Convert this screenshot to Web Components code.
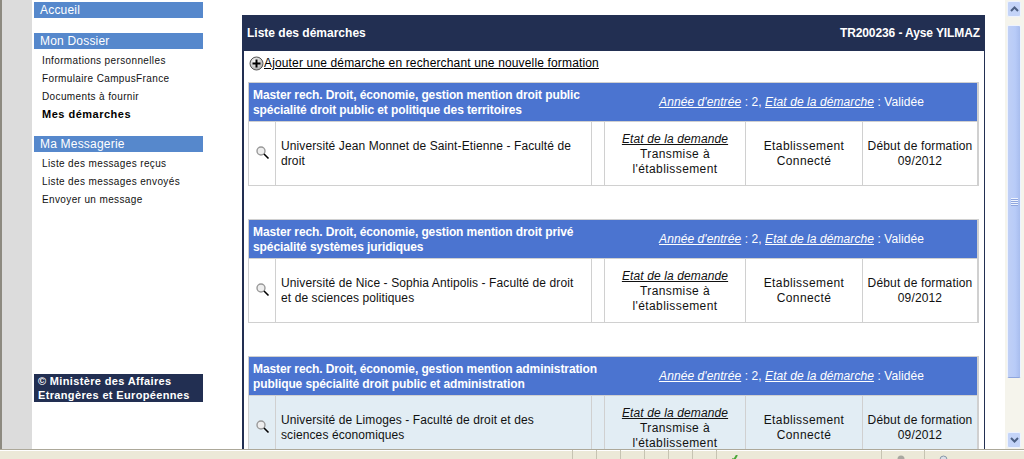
<!DOCTYPE html>
<html lang="fr">
<head>
<meta charset="utf-8">
<title>Liste des démarches</title>
<style>
html, body { margin: 0; height: 459px; overflow: hidden; background: #fff; }
body { font-family: "Liberation Sans", Arial, sans-serif; }
</style>
</head>
<body>
<app-shell>
  <side-nav slot="nav">
    <nav-section title="Accueil"></nav-section>
    <nav-section title="Mon Dossier">
      <nav-link>Informations personnelles</nav-link>
      <nav-link>Formulaire CampusFrance</nav-link>
      <nav-link>Documents à fournir</nav-link>
      <nav-link current>Mes démarches</nav-link>
    </nav-section>
    <nav-section title="Ma Messagerie">
      <nav-link>Liste des messages reçus</nav-link>
      <nav-link>Liste des messages envoyés</nav-link>
      <nav-link>Envoyer un message</nav-link>
    </nav-section>
  </side-nav>
  <demarche-panel slot="main">
    <span slot="title">Liste des démarches</span>
    <span slot="user">TR200236 - Ayse YILMAZ</span>
    <demarche-card
      formation="Master rech. Droit, économie, gestion mention droit public spécialité droit public et politique des territoires"
      etablissement="Université Jean Monnet de Saint-Etienne - Faculté de droit"></demarche-card>
    <demarche-card
      formation="Master rech. Droit, économie, gestion mention droit privé spécialité systèmes juridiques"
      etablissement="Université de Nice - Sophia Antipolis - Faculté de droit et de sciences politiques"></demarche-card>
    <demarche-card tinted
      formation="Master rech. Droit, économie, gestion mention administration publique spécialité droit public et administration"
      etablissement="Université de Limoges - Faculté de droit et des sciences économiques"></demarche-card>
  </demarche-panel>
</app-shell>

<template id="shell-tpl">
<style>
:host { display: grid; grid-template-columns: 1fr 19px; grid-template-rows: 449px 10px; width: 1024px; height: 459px; overflow: hidden; }
.page { display: flex; overflow: hidden; min-width: 0; }
.gutter { width: 30px; flex: none; background: #dcdcdc; border-left: 2px solid #8d8a80; }
.col-nav { width: 210px; flex: none; padding-left: 2px; box-sizing: border-box; }
.col-main { flex: 1; min-width: 0; overflow: hidden; }
.status { grid-column: 1 / 3; background: #ece9d8; border-top: 1px solid #aca899; box-shadow: inset 0 1px 0 #fff; display: flex; }
.status div { border-right: 1px solid #c6c3b2; height: 9px; box-sizing: border-box; padding: 5px 0 0 0; overflow: hidden; flex: none; }
.status svg { display: block; }
</style>
<div class="page">
  <div class="gutter"></div>
  <div class="col-nav"><slot name="nav"></slot></div>
  <div class="col-main"><slot name="main"></slot></div>
</div>
<scroll-track></scroll-track>
<div class="status">
  <div style="width:573px"></div>
  <div style="width:24px"></div>
  <div style="width:24px"></div>
  <div style="width:24px"></div>
  <div style="width:24px"></div>
  <div style="width:24px"></div>
  <div style="width:24px"></div>
  <div style="width:165px;padding-left:14px"><svg width="8" height="5" viewBox="0 0 8 5"><path d="M1 4l2 1 3-5" fill="none" stroke="#4aa83a" stroke-width="2"/></svg></div>
  <div style="width:43px;padding-left:15px"><svg width="8" height="4" viewBox="0 0 8 4"><circle cx="4" cy="4" r="3.5" fill="#a8a8a0"/></svg></div>
  <div style="width:40px;padding-left:14px;border-right:0"><svg width="9" height="4" viewBox="0 0 9 4"><circle cx="4.5" cy="4.5" r="3.5" fill="#d8e0e8" stroke="#8a98a8"/></svg></div>
</div>
</template>

<template id="nav-tpl">
<style>
:host { display: flex; flex-direction: column; height: 449px; box-sizing: border-box; padding-top: 2px; width: 169px; }
.list { flex: 1; display: flex; flex-direction: column; gap: 13px; }
.foot { background: #222f52; color: #fff; font: bold 11px/14px "Liberation Sans", Arial, sans-serif; letter-spacing: .35px; padding: 0 4px; margin-bottom: 47px; height: 28px; }
</style>
<div class="list"><slot></slot></div>
<div class="foot">© Ministère des Affaires<br>Etrangères et Européennes</div>
</template>

<template id="section-tpl">
<style>
:host { display: block; }
h2 { margin: 0; height: 16px; background: #5688cc; color: #fff; font: normal 12px/16px "Liberation Sans", Arial, sans-serif; letter-spacing: .2px; padding-left: 6px; }
.links { display: flex; flex-direction: column; padding: 2px 0 0 8px; }
</style>
<h2></h2>
<div class="links"><slot></slot></div>
</template>

<template id="link-tpl">
<style>
:host { display: block; height: 18px; font: 10px/20px "Liberation Sans", Arial, sans-serif; letter-spacing: .37px; color: #111; white-space: nowrap; }
:host([current]) { font-weight: bold; font-size: 11px; line-height: 18px; color: #000; letter-spacing: .5px; }
</style>
<slot></slot>
</template>

<template id="panel-tpl">
<style>
:host { display: block; width: 743px; margin: 15px 0 0 0; box-sizing: border-box; height: 434px; font: 12px/15px "Liberation Sans", Arial, sans-serif; color: #111; border-left: 2px solid #222f52; border-right: 1px solid #222f52; }
header { display: flex; justify-content: space-between; align-items: center; height: 36px; margin-left: -2px; margin-right: -1px; background: #222f52; color: #fff; font-weight: bold; padding: 0 5px; }
::slotted([slot="user"]) { letter-spacing: -.1px; }
.add { display: flex; align-items: center; height: 23px; margin: 0 0 7px 5px; padding-top: 1px; color: #000; }
.add svg { flex: none; }
.add a { text-decoration: underline; letter-spacing: .15px; }
.cards { display: flex; flex-direction: column; gap: 33px; padding: 0 5px 0 4px; }
</style>
<header><slot name="title"></slot><slot name="user"></slot></header>
<div class="add">
  <svg width="15" height="15" viewBox="0 0 15 15"><defs><radialGradient id="g" cx=".4" cy=".35" r=".7"><stop offset="0" stop-color="#fff"/><stop offset="1" stop-color="#a8a8a8"/></radialGradient></defs><circle cx="7.5" cy="7.5" r="6.5" fill="url(#g)" stroke="#555"/><path d="M7.5 3.5v8M3.5 7.5h8" stroke="#000" stroke-width="2"/></svg>
  <a>Ajouter une démarche en recherchant une nouvelle formation</a>
</div>
<div class="cards"><slot></slot></div>
</template>

<template id="card-tpl">
<style>
:host { display: block; width: 731px; border: 1px solid #d0d0d0; border-right-width: 2px; box-sizing: border-box; font: 12px/15px "Liberation Sans", Arial, sans-serif; color: #111; }
.head { display: grid; grid-template-columns: 351px 1fr; align-items: center; box-sizing: border-box; height: 39px; background: #4b74d0; color: #fff; border-bottom: 1px solid #d0d0d0; }
.formation { font-weight: bold; padding: 1px 0 0 4px; letter-spacing: -.1px; }
.meta { text-align: center; padding: 1px 0 0 6px; letter-spacing: .08px; }
u { font-style: italic; }
.row { display: grid; grid-template-columns: 26px 316px 13px 141px 117px 1fr; height: 63px; background: #fff; }
:host([tinted]) .row { background: #e2edf4; }
.row > div { display: flex; align-items: center; justify-content: center; text-align: center; box-sizing: border-box; border-left: 1px solid #d0d0d0; }
.row > div:first-child { border-left: 0; }
.row svg { margin-bottom: 2px; }
.row > .name { justify-content: flex-start; text-align: left; padding: 0 10px 0 5px; letter-spacing: .1px; }
.stack { letter-spacing: .4px; }
.stack u { letter-spacing: .12px; }
.stack.etat { padding-top: 2px; }
.stack.debut { letter-spacing: .15px; }
</style>
<div class="head">
  <div class="formation"></div>
  <div class="meta"><u>Année d'entrée</u> : 2, <u>Etat de la démarche</u> : Validée</div>
</div>
<div class="row">
  <div><svg width="15" height="15" viewBox="0 0 15 15"><circle cx="6" cy="6" r="4" fill="#eee" stroke="#999" stroke-width="1.4"/><path d="M9 9l4.5 4.5" stroke="#000" stroke-width="1.6"/></svg></div>
  <div class="name"></div>
  <div></div>
  <div class="stack etat"><span><u>Etat de la demande</u><br>Transmise à<br>l'établissement</span></div>
  <div class="stack"><span>Etablissement<br>Connecté</span></div>
  <div class="stack debut"><span>Début de formation<br>09/2012</span></div>
</div>
</template>

<template id="track-tpl">
<style>
:host { display: flex; flex-direction: column; background: #f5f4ec; padding: 1px 3px 0 2px; box-sizing: border-box; height: 449px; }
.btn { height: 16px; flex: none; background: #c4d4f8; border: 1px solid #eef3fe; border-radius: 2px; box-sizing: border-box; display: flex; align-items: center; justify-content: center; }
.thumb { flex: none; height: 353px; margin-top: 8px; background: linear-gradient(90deg, #c0d0f6, #b8cbf8 60%, #a8bdee); border: 1px solid #eef3fe; border-bottom-color: #8fa6de; border-radius: 2px; box-sizing: border-box; display: flex; align-items: center; justify-content: center; }
.spacer { flex: 1; }
.grip { width: 7px; height: 8px; background: repeating-linear-gradient(#eef3fe 0 1px, #8fa6de 1px 2px); }
.btn.end { margin-bottom: 1px; }
</style>
<div class="btn"><svg width="9" height="6" viewBox="0 0 9 6"><path d="M1 5l3.5-3.5L8 5" fill="none" stroke="#4d6185" stroke-width="2"/></svg></div>
<div class="thumb"><div class="grip"></div></div>
<div class="spacer"></div>
<div class="btn end"><svg width="9" height="6" viewBox="0 0 9 6"><path d="M1 1l3.5 3.5L8 1" fill="none" stroke="#4d6185" stroke-width="2"/></svg></div>
</template>

<script>
function stamp(el, id) {
  const root = el.attachShadow({ mode: 'open' })
  root.appendChild(document.getElementById(id).content.cloneNode(true))
  return root
}

customElements.define('app-shell', class extends HTMLElement {
  constructor() { super(); stamp(this, 'shell-tpl') }
})
customElements.define('side-nav', class extends HTMLElement {
  constructor() { super(); stamp(this, 'nav-tpl') }
})
customElements.define('nav-section', class extends HTMLElement {
  constructor() { super(); this._root = stamp(this, 'section-tpl') }
  connectedCallback() {
    this._root.querySelector('h2').textContent = this.getAttribute('title')
    this.removeAttribute('title')
  }
})
customElements.define('nav-link', class extends HTMLElement {
  constructor() { super(); stamp(this, 'link-tpl') }
})
customElements.define('demarche-panel', class extends HTMLElement {
  constructor() { super(); stamp(this, 'panel-tpl') }
})
customElements.define('demarche-card', class extends HTMLElement {
  constructor() { super(); this._root = stamp(this, 'card-tpl') }
  connectedCallback() {
    this._root.querySelector('.formation').textContent = this.getAttribute('formation')
    this._root.querySelector('.name').textContent = this.getAttribute('etablissement')
  }
})
customElements.define('scroll-track', class extends HTMLElement {
  constructor() { super(); stamp(this, 'track-tpl') }
})
</script>
</body>
</html>
